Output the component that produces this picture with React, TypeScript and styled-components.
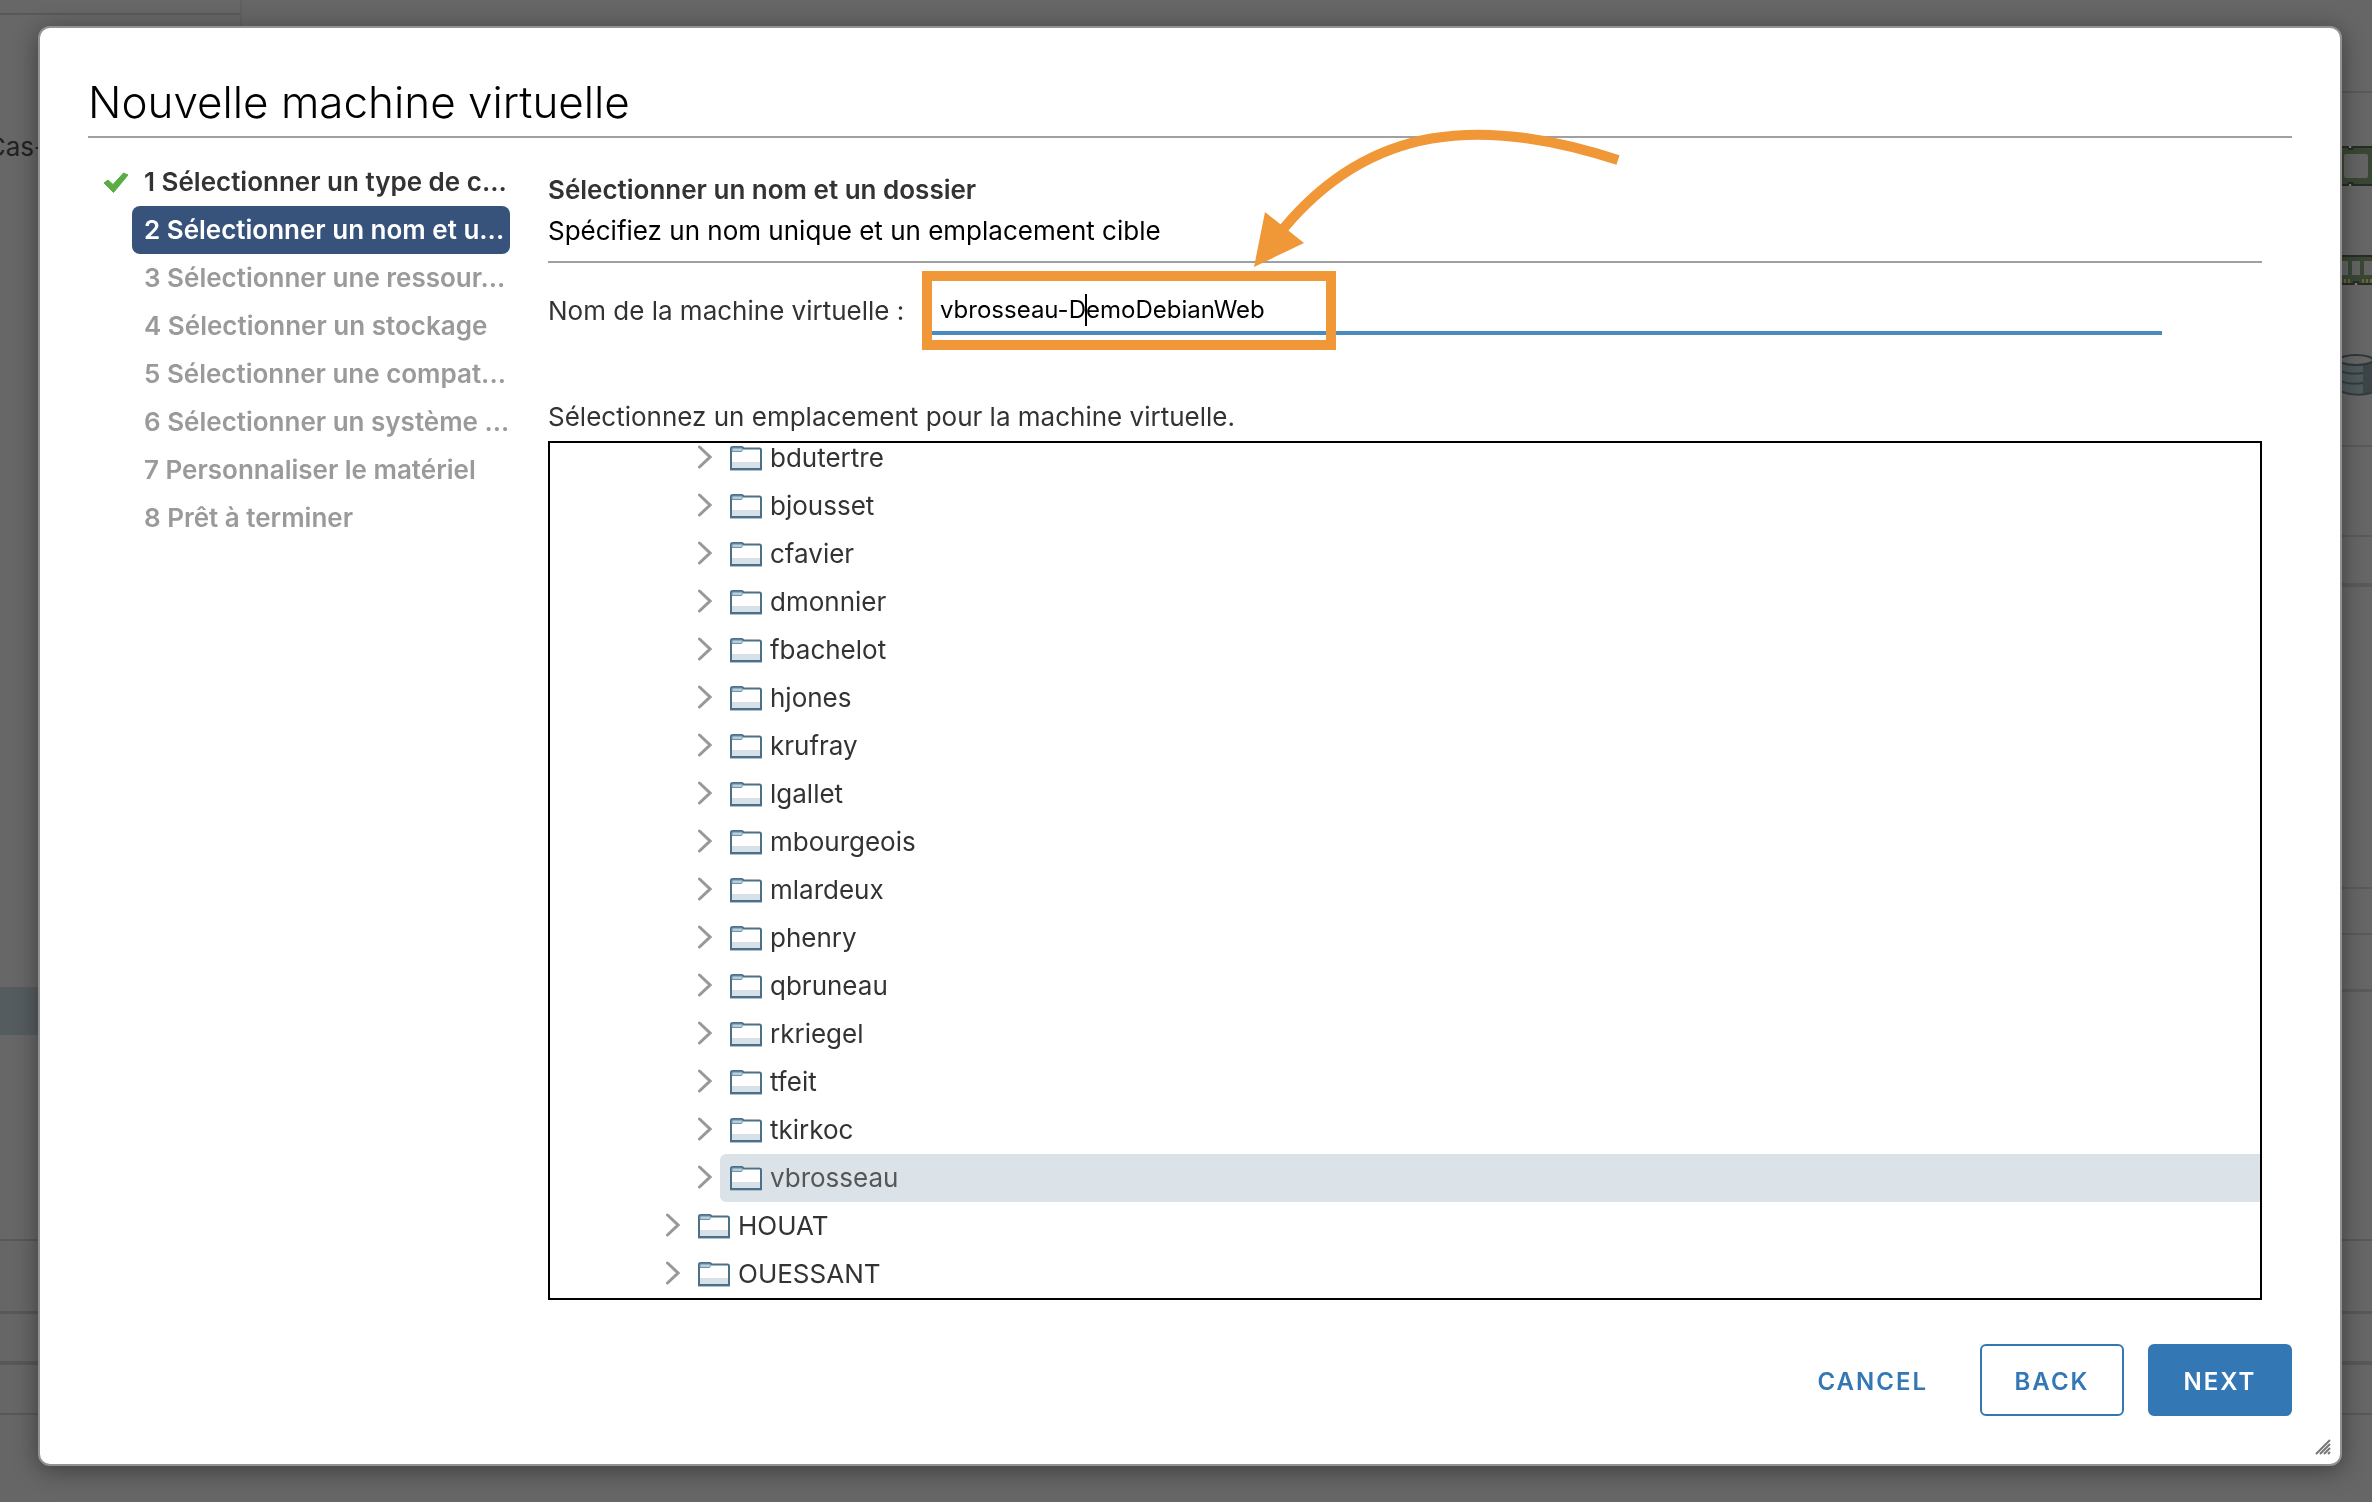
import React from "react";
import styled, { createGlobalStyle, css } from "styled-components";

const sans = `Inter, "Noto Sans", sans-serif`;

const GlobalStyle = createGlobalStyle`
  *, *::before, *::after { box-sizing: border-box; }
  html, body { margin: 0; height: 100%; background: #666666; }
  body { font-family: ${sans}; font-size: 26px; line-height: 36px; color: #333333; overflow: hidden; }
  h1, h2, p, ol, ul { margin: 0; padding: 0; }
  ol, ul { list-style: none; }
`;

/* ---------- dimmed page behind the dialog ---------- */

const Page = styled.div`
  height: 100vh;
  display: flex;
  flex-direction: column;
  color: #222222;
`;
const PageTop = styled.div`
  height: 1241px;
  display: flex;
  justify-content: space-between;
  border-bottom: 2px solid #585858;
`;
const Inventory = styled.aside`
  width: 242px;
  overflow: hidden;
  background: #676767;
  border-right: 2px solid #606060;
  display: flex;
  flex-direction: column;
`;
const InventoryTabs = styled.div`
  height: 15px;
  flex: none;
  border-bottom: 2px solid #595959;
`;
const InventoryItem = styled.div`
  padding-top: 114px;
  height: 972px;
  flex: none;
  display: flex;
  justify-content: flex-end;
  width: 46px;
  white-space: nowrap;
`;
const InventorySelected = styled.div`
  height: 48px;
  flex: none;
  background: #555c60;
`;
const Summary = styled.aside`
  width: 40px;
  display: flex;
  flex-direction: column;
`;
const SummarySection = styled.div<{ $h: number; $line?: number }>`
  height: ${(p) => p.$h}px;
  flex: none;
  border-bottom: ${(p) => p.$line ?? 2}px solid #5a5a5a;
`;
const Meters = styled(SummarySection)`
  display: flex;
  flex-direction: column;
  align-items: flex-end;
  padding-top: 53px;
  svg { flex: none; display: block; }
`;
const MeterGap = styled.div`
  height: 69px;
  flex: none;
`;
const TaskRow = styled.div<{ $h: number; $line: number }>`
  height: ${(p) => p.$h}px;
  flex: none;
  border-bottom: ${(p) => p.$line}px solid #585858;
`;

/* ---------- dialog ---------- */

const Dialog = styled.div`
  position: fixed;
  inset: 26px 30px 36px 38px;
  display: flex;
  flex-direction: column;
  padding: 48px 48px;
  background: #ffffff;
  border: 2px solid #929292;
  border-radius: 12px;
  box-shadow: 0 4px 24px rgba(0, 0, 0, 0.4);
`;
const Title = styled.h1`
  font-weight: 300;
  font-size: 44px;
  line-height: 52px;
  color: #000000;
  padding-bottom: 8px;
  border-bottom: 2px solid #a0a0a0;
`;
const Body = styled.div`
  flex: 1;
  min-height: 0;
  display: grid;
  grid-template-columns: 422px minmax(0, 1fr);
  column-gap: 38px;
  padding: 20px 30px 0 0;
`;
const Steps = styled.ol``;
const Step = styled.li`
  display: grid;
  grid-template-columns: 44px 1fr;
  align-items: center;
  height: 48px;
`;
const StepMark = styled.span`
  display: flex;
  justify-content: flex-end;
  padding-right: 3px;
`;
type StepState = "done" | "current" | "todo";
const stepLook = {
  done: css`color: #333333;`,
  current: css`color: #ffffff; background: #37537b;`,
  todo: css`color: #9a9a9a;`,
};
const StepButton = styled.button<{ $state: StepState }>`
  width: 378px;
  height: 48px;
  padding: 0 0 0 12px;
  border: 0;
  border-radius: 8px;
  background: transparent;
  font: 600 26px/36px ${sans};
  text-align: left;
  white-space: nowrap;
  ${(p) => stepLook[p.$state]}
`;
const Content = styled.section`
  min-width: 0;
  display: flex;
  flex-direction: column;
  padding-top: 12px;
`;
const StepTitle = styled.h2`
  font-size: 26px;
  line-height: 40px;
  font-weight: 600;
`;
const StepIntro = styled.p`
  font-size: 26px;
  line-height: 40px;
  color: #000000;
  padding: 1px 0 10px;
  border-bottom: 2px solid #a0a0a0;
`;
const Field = styled.div`
  display: flex;
  padding: 24px 100px 0 0;
`;
const Label = styled.label`
  width: 384px;
  flex: none;
  font-size: 26px;
  line-height: 48px;
`;
const InputWrap = styled.div`
  position: relative;
  flex: 1;
`;
const NameInput = styled.input`
  display: block;
  width: 100%;
  height: 48px;
  padding: 0 8px;
  border: 0;
  border-bottom: 4px solid #4a8cbe;
  background: transparent;
  font: 400 24px/36px ${sans};
  color: #000000;
  outline: 0;
`;
const Caret = styled.span`
  position: absolute;
  left: 153px;
  top: 7px;
  width: 2px;
  height: 32px;
  background: #000000;
`;
const Highlight = styled.span`
  position: absolute;
  left: -10px;
  top: -16px;
  width: 414px;
  height: 79px;
  border: 10px solid #f09737;
  pointer-events: none;
`;
const PointerArrow = styled.svg`
  position: absolute;
  left: 308px;
  top: -167px;
  overflow: visible;
  pointer-events: none;
`;
const TreeCaption = styled.p`
  font-size: 26px;
  line-height: 36px;
  padding: 64px 0 6px;
`;
const Tree = styled.ul`
  height: 859px;
  display: flex;
  flex-direction: column;
  justify-content: flex-end;
  overflow: hidden;
  border: 2px solid #000000;
`;
const TreeRow = styled.li<{ $level: number }>`
  flex: none;
  height: 48px;
  display: flex;
  padding-left: ${(p) => 82 + p.$level * 32}px;
`;
const Toggle = styled.button`
  width: 24px;
  height: 46px;
  flex: none;
  display: flex;
  align-items: center;
  padding: 0 0 0 2px;
  border: 0;
  background: none;
`;
const Node = styled.span<{ $selected?: boolean }>`
  flex: 1;
  display: flex;
  align-items: center;
  gap: 8px;
  padding-left: 10px;
  border-radius: 6px 0 0 6px;
  font-size: 26px;
  background: ${(p) => (p.$selected ? "#dbe3e8" : "transparent")};
  color: ${(p) => (p.$selected ? "#565656" : "#333333")};
`;
const Footer = styled.footer`
  display: flex;
  justify-content: flex-end;
  gap: 24px;
`;
const Button = styled.button<{ $kind: "flat" | "outline" | "solid" }>`
  height: 72px;
  min-width: 144px;
  padding: 4px 26px 0;
  border-radius: 6px;
  border: 2px solid ${(p) => (p.$kind === "flat" ? "transparent" : "#3477b5")};
  background: ${(p) => (p.$kind === "solid" ? "#3477b5" : "transparent")};
  color: ${(p) => (p.$kind === "solid" ? "#ffffff" : "#3477b5")};
  font: 600 24px/36px ${sans};
  letter-spacing: 2px;
`;
const Grip = styled.svg`
  position: absolute;
  right: 9px;
  bottom: 9px;
`;

const CheckIcon = () => (
  <svg width="26" height="24" viewBox="0 0 26 24" aria-hidden="true">
    <path d="M1 13 5 10l5 4.500L20.500 3 25 5 10.500 22.500z" fill="#5cac45" stroke="#5cac45" strokeLinejoin="round" />
  </svg>
);
const Chevron = () => (
  <svg width="14" height="24" viewBox="0 0 14 24" fill="none" aria-hidden="true">
    <path d="M1.500 2 12 12 1.500 22" stroke="#989898" strokeWidth="3" strokeLinecap="round" />
  </svg>
);
const Folder = () => (
  <svg width="32" height="26" viewBox="0 0 32 26" aria-hidden="true">
    <path d="M1 2h30v22H1z" fill="#ffffff" />
    <path d="M2 17h28v6H2z" fill="#d7dfe7" />
    <path d="M1 24V3.500Q1 2 2.500 2H12l2 1.500h15.500Q31 3.500 31 5v19z" fill="none" stroke="#4b7088" strokeWidth="2" />
    <path d="M2 3h10l1 1-1.500 2.500H2z" fill="#b9cedb" stroke="#6f91a6" />
    <path d="M0 25.500h32" stroke="#a9c3d2" />
  </svg>
);
const CpuIcon = () => (
  <svg width="30" height="40" viewBox="0 0 30 40" aria-hidden="true">
    <path d="M0 0h30v40H0z" fill="#3a4735" />
    <path d="M0 1h6l1 2h3l1-2h19M0 39h6l1-2h3l1 2h19" fill="none" stroke="#262d25" strokeWidth="2" />
    <path d="M7 0h2v2H7zM7 38h2v2H7z" fill="#808080" />
    <rect x="2" y="8" width="24" height="24" rx="2" fill="#646464" />
  </svg>
);
const MemoryIcon = () => (
  <svg width="30" height="30" viewBox="0 0 30 30" aria-hidden="true">
    <path d="M0 0h30v30H0z" fill="#3a4735" />
    <path d="M0 1h30M0 29h11l1-2h4l1 2h13" fill="none" stroke="#262d25" strokeWidth="2" />
    <path d="M0 6h6v14H0zM10 6h8v14h-8zM22 6h8v14h-8z" fill="#646464" />
    <path d="M2 26h6M20 26h10" stroke="#6a673c" strokeWidth="4" strokeDasharray="2 2" />
    <path d="M13 28h2v2h-2z" fill="#808080" />
  </svg>
);
const StorageIcon = () => (
  <svg width="30" height="42" viewBox="0 0 30 42" aria-hidden="true">
    <path d="M-2 6v31c4 5 28 5 34 0V6z" fill="#4f5a5d" />
    <path d="M21 10l9-3v31l-9 2z" fill="#3d4548" />
    <ellipse cx="14" cy="6" rx="17" ry="5" fill="#666666" stroke="#30373a" strokeWidth="2" />
    <path d="M-2 17q10 4 23 2M-2 27q10 4 23 2M-2 37q16 7 34 1" fill="none" stroke="#343c40" strokeWidth="2" />
  </svg>
);

const steps: { label: string; state: StepState }[] = [
  { label: "1 Sélectionner un type de c...", state: "done" },
  { label: "2 Sélectionner un nom et u...", state: "current" },
  { label: "3 Sélectionner une ressour...", state: "todo" },
  { label: "4 Sélectionner un stockage", state: "todo" },
  { label: "5 Sélectionner une compat...", state: "todo" },
  { label: "6 Sélectionner un système ...", state: "todo" },
  { label: "7 Personnaliser le matériel", state: "todo" },
  { label: "8 Prêt à terminer", state: "todo" },
];

const folders: { name: string; level: number }[] = [
  ..."bdutertre bjousset cfavier dmonnier fbachelot hjones krufray lgallet mbourgeois mlardeux phenry qbruneau rkriegel tfeit tkirkoc vbrosseau"
    .split(" ")
    .map((name) => ({ name, level: 2 })),
  { name: "HOUAT", level: 1 },
  { name: "OUESSANT", level: 1 },
];

export default function App() {
  return (
    <>
      <GlobalStyle />
      <Page>
        <PageTop>
          <Inventory>
            <InventoryTabs />
            <InventoryItem>Cas-</InventoryItem>
            <InventorySelected />
          </Inventory>
          <Summary>
            <SummarySection $h={93} />
            <Meters $h={354}>
              <CpuIcon />
              <MeterGap />
              <MemoryIcon />
              <MeterGap />
              <StorageIcon />
            </Meters>
            <SummarySection $h={90} />
            <SummarySection $h={50} $line={4} />
            <SummarySection $h={302} />
            <SummarySection $h={46} />
            <SummarySection $h={57} $line={3} />
          </Summary>
        </PageTop>
        <TaskRow $h={73} $line={3} />
        <TaskRow $h={51} $line={4} />
        <TaskRow $h={50} $line={2} />
      </Page>

      <Dialog role="dialog" aria-labelledby="dialog-title">
        <Title id="dialog-title">Nouvelle machine virtuelle</Title>
        <Body>
          <Steps>
            {steps.map((s) => (
              <Step key={s.label}>
                <StepMark>{s.state === "done" && <CheckIcon />}</StepMark>
                <StepButton type="button" $state={s.state}>{s.label}</StepButton>
              </Step>
            ))}
          </Steps>
          <Content>
            <StepTitle>Sélectionner un nom et un dossier</StepTitle>
            <StepIntro>Spécifiez un nom unique et un emplacement cible</StepIntro>
            <Field>
              <Label htmlFor="vm-name">Nom de la machine virtuelle :</Label>
              <InputWrap>
                <NameInput id="vm-name" type="text" defaultValue="vbrosseau-DemoDebianWeb" />
                <Caret />
                <Highlight />
                <PointerArrow width="380" height="150" viewBox="1240 120 380 150" aria-hidden="true">
                  <path d="M1618 160C1480 115 1370 125 1284 228" fill="none" stroke="#f09737" strokeWidth="10" />
                  <path d="M1254 267 1265 212 1304 243z" fill="#f09737" />
                </PointerArrow>
              </InputWrap>
            </Field>
            <TreeCaption>Sélectionnez un emplacement pour la machine virtuelle.</TreeCaption>
            <Tree>
              {folders.map((f) => (
                <TreeRow key={f.name} $level={f.level}>
                  <Toggle type="button" aria-label={f.name}><Chevron /></Toggle>
                  <Node $selected={f.name === "vbrosseau"}>
                    <Folder />
                    {f.name}
                  </Node>
                </TreeRow>
              ))}
            </Tree>
          </Content>
        </Body>
        <Footer>
          <Button type="button" $kind="flat">CANCEL</Button>
          <Button type="button" $kind="outline">BACK</Button>
          <Button type="button" $kind="solid">NEXT</Button>
        </Footer>
        <Grip width="16" height="16" viewBox="0 0 16 16" aria-hidden="true">
          <path d="M15 1 1 15M15 5 5 15M15 9 9 15M15 13l-2 2" stroke="#777777" strokeWidth="2" />
        </Grip>
      </Dialog>
    </>
  );
}
